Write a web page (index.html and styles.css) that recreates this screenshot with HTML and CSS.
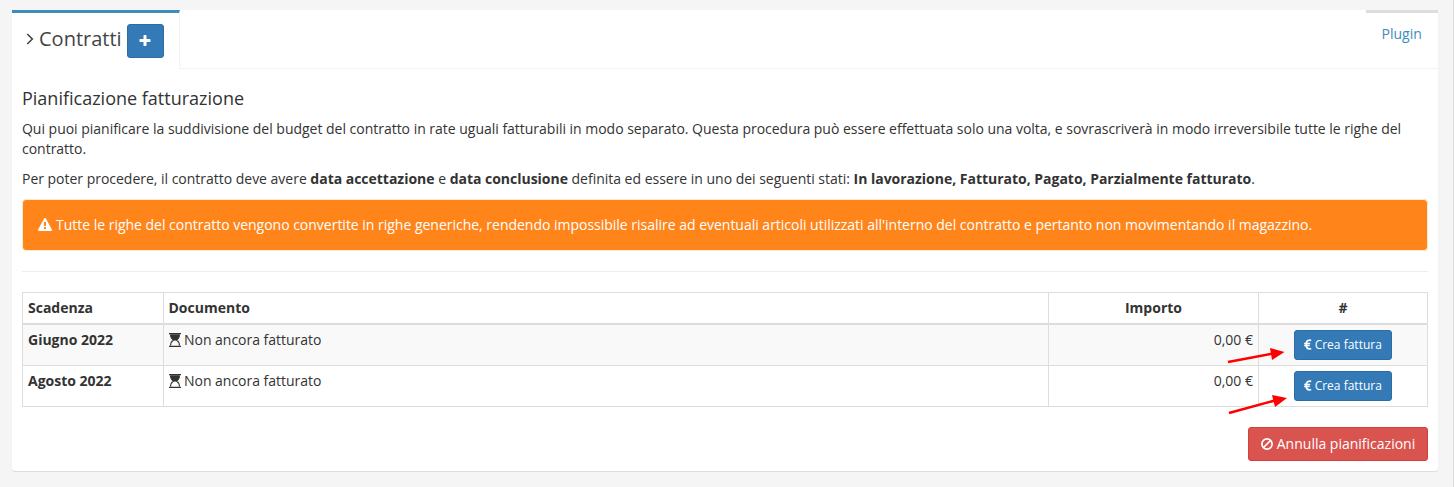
FILE: index.html
```html
<!DOCTYPE html>
<html lang="it">
<head>
<meta charset="utf-8">
<title>Contratti</title>
<link rel="stylesheet" href="styles.css">
</head>
<body>
<svg class="defs" aria-hidden="true">
  <symbol id="euro" viewBox="0 0 8 11"><path d="M7.200 1.500A3.700 3.700 0 0 0 5.500 1.100C3.300 1.100 2.200 2.800 2.200 5.500S3.300 9.900 5.500 9.900A3.700 3.700 0 0 0 7.200 9.500M.2 4.500H6.200M.2 6.500H5.700" fill="none" stroke="currentColor" stroke-width="1.700"/></symbol>
  <symbol id="hourglass" viewBox="0 0 12 14"><path d="M0 0h12v1.300H0zM0 12.700h12V14H0z" fill="currentColor"/><path d="M1.600 1.400c0 3 1.300 4.600 3 5.600-1.700 1-3 2.600-3 5.600M10.400 1.400c0 3-1.300 4.600-3 5.600 1.700 1 3 2.600 3 5.600" fill="none" stroke="currentColor" stroke-width="1.200"/><path d="M1.600 1.300h8.800C10.300 4.500 9 6 7.400 7.600H4.600C3 6 1.700 4.500 1.600 1.300z" fill="currentColor"/></symbol>
</svg>
<main class="panel">
  <nav class="tabs">
    <div class="tab tab-active">
      <svg class="angle" viewBox="0 0 8 12"><path d="M1.300 1 6.300 6 1.300 11" fill="none" stroke="currentColor" stroke-width="1.600"/></svg>
      <span class="tab-title">Contratti</span>
      <button class="btn btn-primary btn-add" aria-label="Aggiungi"><svg viewBox="0 0 1792 1792" width="14" height="14"><path fill="currentColor" d="M1600 736v192q0 40-28 68t-68 28h-416v416q0 40-28 68t-68 28h-192q-40 0-68-28t-28-68v-416h-416q-40 0-68-28t-28-68v-192q0-40 28-68t68-28h416v-416q0-40 28-68t68-28h192q40 0 68 28t28 68v416h416q40 0 68 28t28 68z"/></svg></button>
    </div>
    <a class="tab tab-plugin">Plugin</a>
  </nav>
  <section class="content">
    <h4>Pianificazione fatturazione</h4>
    <p>Qui puoi pianificare la suddivisione del budget del contratto in rate uguali fatturabili in modo separato. Questa procedura può essere effettuata solo una volta, e sovrascriverà in modo irreversibile tutte le righe del contratto.</p>
    <p>Per poter procedere, il contratto deve avere <b>data accettazione</b> e <b>data conclusione</b> definita ed essere in uno dei seguenti stati: <b>In lavorazione, Fatturato, Pagato, Parzialmente fatturato</b>.</p>
    <div class="alert">
      <svg viewBox="0 0 1792 1792" width="14" height="14"><path fill="currentColor" d="M1024 1375v-190q0-14-9.500-23.500t-22.500-9.500h-192q-13 0-22.500 9.500t-9.500 23.500v190q0 14 9.500 23.500t22.500 9.500h192q13 0 22.500-9.500t9.500-23.500zm-2-374l18-459q0-12-10-19-13-11-24-11h-220q-11 0-24 11-10 7-10 21l17 457q0 10 10 16.500t24 6.500h185q14 0 23.500-6.500t10.500-16.500zm-14-934l768 1408q35 63-2 126-17 29-46.500 46t-63.500 17h-1536q-34 0-63.500-17t-46.500-46q-37-63-2-126l768-1408q17-31 47-49t65-18 65 18 47 49z"/></svg>
      <span>Tutte le righe del contratto vengono convertite in righe generiche, rendendo impossibile risalire ad eventuali articoli utilizzati all'interno del contratto e pertanto non movimentando il magazzino.</span>
    </div>
    <hr>
    <table>
      <colgroup><col class="col-date"><col><col class="col-amount"><col class="col-action"></colgroup>
      <thead><tr><th>Scadenza</th><th class="document">Documento</th><th class="center">Importo</th><th class="center">#</th></tr></thead>
      <tbody>
        <tr><td><b>Giugno 2022</b></td><td class="document"><svg class="hourglass"><use href="#hourglass"/></svg>Non ancora fatturato</td><td class="right">0,00 €</td><td class="center"><button class="btn btn-primary btn-sm"><svg class="euro"><use href="#euro"/></svg>Crea fattura</button></td></tr>
        <tr><td><b>Agosto 2022</b></td><td class="document"><svg class="hourglass"><use href="#hourglass"/></svg>Non ancora fatturato</td><td class="right">0,00 €</td><td class="center"><button class="btn btn-primary btn-sm"><svg class="euro"><use href="#euro"/></svg>Crea fattura</button></td></tr>
      </tbody>
    </table>
    <div class="actions">
      <button class="btn btn-danger"><svg viewBox="0 0 12 12" width="12" height="12"><g fill="none" stroke="currentColor" stroke-width="1.700"><circle cx="6" cy="6" r="5.100"/><path d="M2.500 9.500l7-7"/></g></svg>Annulla pianificazioni</button>
    </div>
  </section>
</main>
<svg class="arrows" width="64" height="72" viewBox="1226 345 64 72">
  <path d="M1228 362 1273 353.500M1229 413 1275 400.500" stroke="#f00" stroke-width="2.500"/>
  <path d="M1284.500 352 1270 348 1272 360zM1287 398 1272 395 1275 407z" fill="#f00"/>
</svg>
</body>
</html>
```
FILE: styles.css
```css
* { box-sizing: border-box; }
body {
  margin: 0;
  height: 487px;
  padding: 10px 15px 0 12px;
  overflow: hidden;
  background: #f5f5f5;
  border-right: 1px solid #dcdde0;
  color: #333;
  font: 14px/20px "Open Sans", "Noto Sans", sans-serif;
}
.defs { position: absolute; width: 0; height: 0; }
.panel {
  height: 461px;
  background: #fff;
  border-radius: 3px;
  box-shadow: 0 1px 1px rgba(0, 0, 0, .1);
}
.tabs {
  display: flex;
  justify-content: space-between;
  height: 59px;
  border-bottom: 1px solid #f4f4f4;
}
.tab { height: 59px; border-top: 3px solid #ddd; }
.tab-active {
  display: flex;
  width: 168px;
  padding: 11px 0 0 14px;
  background: #fff;
  border-top-color: #3c8dbc;
  border-right: 1px solid #f4f4f4;
  color: #444;
}
.angle { width: 8px; height: 12px; margin: 9px 5px 0 0; }
.tab-title { width: 88px; font-size: 20px; line-height: 30px; white-space: nowrap; }
.tab-plugin { width: 72px; padding: 11px 0 0 15.500px; color: #3c8dbc; }
.btn {
  display: inline-flex;
  align-items: center;
  justify-content: center;
  height: 34px;
  padding: 0;
  border: 1px solid;
  border-radius: 3px;
  color: #fff;
  font: inherit;
  white-space: nowrap;
}
.btn-primary { background: #337ab7; border-color: #2e6da4; }
.btn-add { width: 37px; padding-right: 1px; }
.content { padding: 19px 10px 0; }
h4 { margin: 0 0 11px; font-size: 18px; line-height: 20px; font-weight: 400; }
p { margin: 0 0 10px; letter-spacing: -.017px; }
.alert {
  display: flex;
  height: 52px;
  padding: 15px;
  background: #ff851b;
  border: 1px solid #faebcc;
  border-radius: 4px;
  color: #fff;
  letter-spacing: -.014px;
  white-space: nowrap;
}
.alert svg { margin: 3px 4px 0 0; }
hr { margin: 20px 0; border: 0; border-top: 1px solid #eee; }
table { width: 100%; table-layout: fixed; border-collapse: collapse; }
.col-date { width: 141px; }
.col-amount { width: 210px; }
.col-action { width: 169px; }
th, td { height: 41px; padding: 5px; border: 1px solid #ddd; text-align: left; vertical-align: top; }
th { height: 31px; border-bottom-width: 2px; }
tbody tr:first-child { background: #f9f9f9; }
th.center, td.center { text-align: center; }
td.right { text-align: right; }
th.document, td.document { padding-left: 4.500px; }
td.document { letter-spacing: -.02px; }
.hourglass { width: 12px; height: 14px; margin-right: 3.500px; vertical-align: -2px; }
.btn-sm { width: 98px; height: 30px; font-size: 12px; vertical-align: top; }
.euro { width: 8px; height: 11px; margin: -1px 2.500px 0 0; }
.actions { display: flex; justify-content: flex-end; margin-top: 20px; }
.btn-danger { width: 180px; background: #d9534f; border-color: #d43f3a; }
.btn-danger svg { margin-right: 4px; }
.arrows { position: absolute; left: 1226px; top: 345px; }
```
